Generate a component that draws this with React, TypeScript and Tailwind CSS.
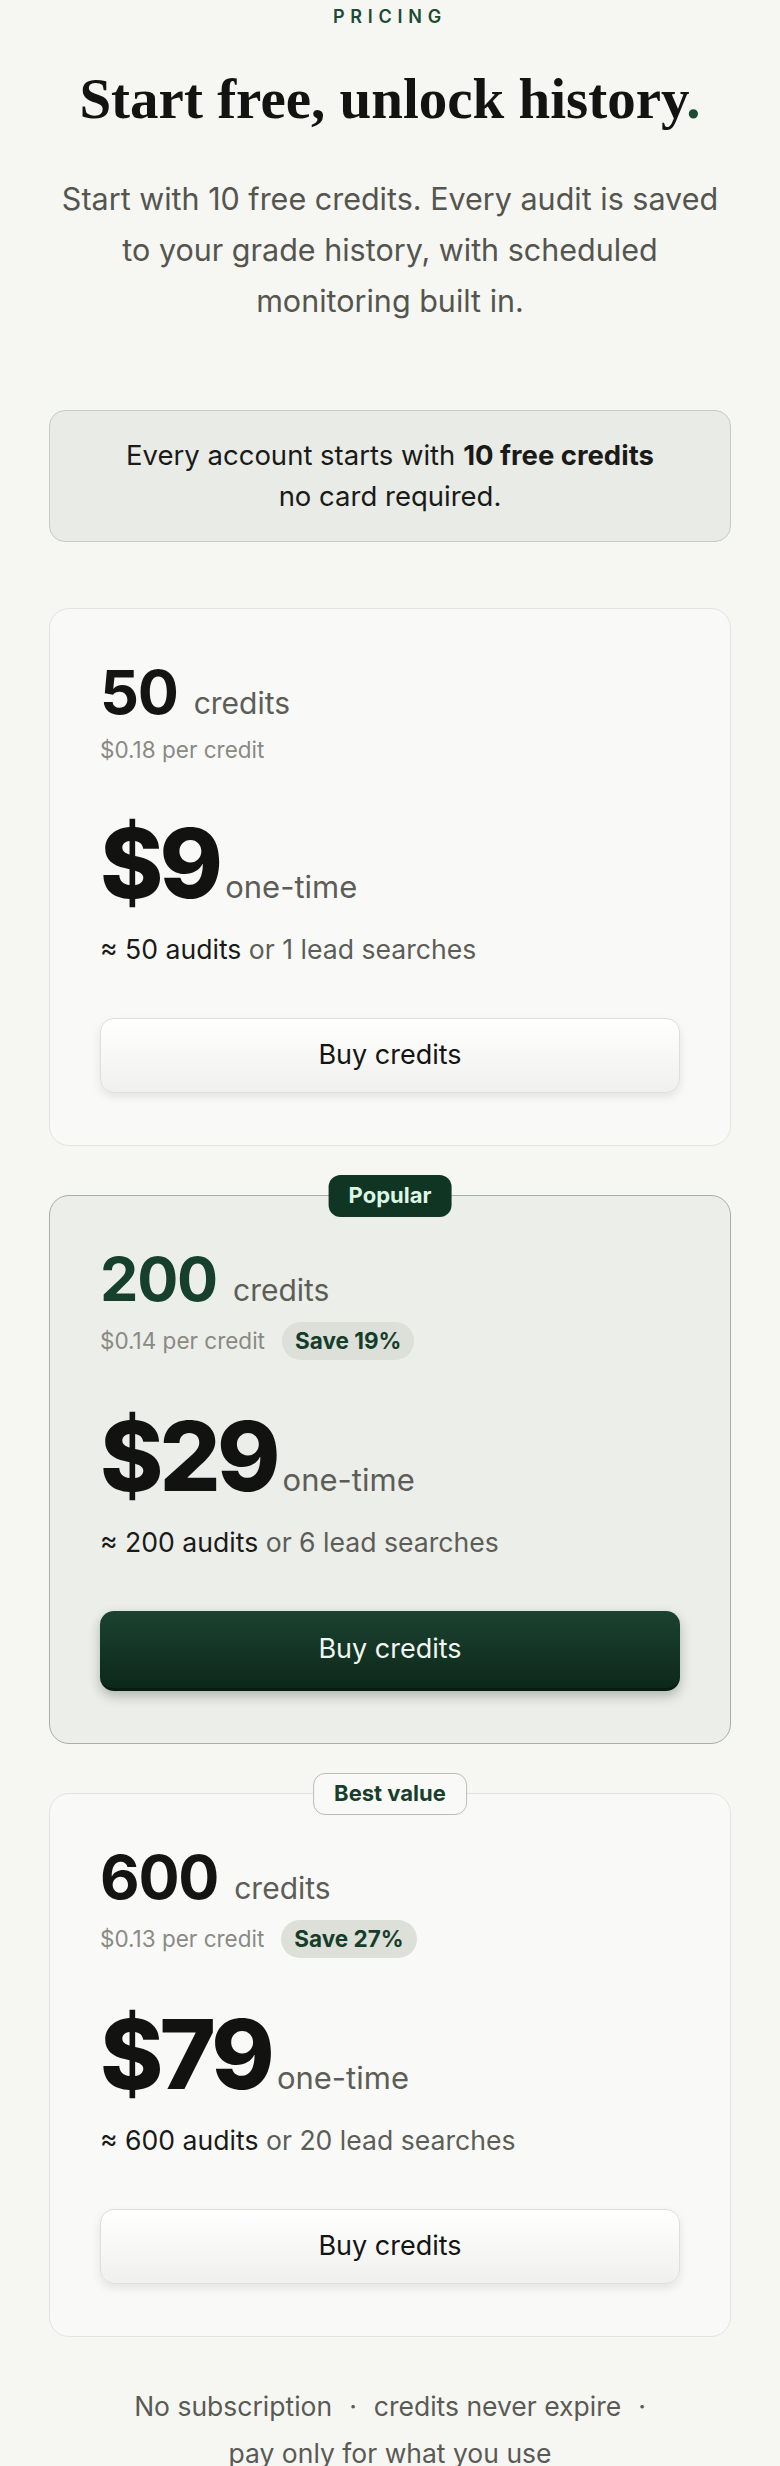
import React from "react";

const PACKS = [
  {
    credits: "200",
    perCredit: "$0.14 per credit",
    save: "Save 19%",
    price: "$29",
    audits: "200 audits",
    leads: "or 6 lead searches",
  },
];

function Badge({ kind }: { kind: "popular" | "best" }) {
  if (kind === "popular") {
    return (
      <div className="absolute left-1/2 -top-[21px] -translate-x-1/2 h-[42px] px-[20px] flex items-center rounded-[12px] bg-[#113523] text-[#dcf6e6] text-[22px] font-bold whitespace-nowrap">
        Popular
      </div>
    );
  }
  return (
    <div className="absolute left-1/2 -top-[21px] -translate-x-1/2 h-[42px] px-[20px] flex items-center rounded-[12px] bg-[#f9faf7] border-[1.5px] border-[#b9bdb6] text-[#173f2b] text-[22px] font-bold whitespace-nowrap">
      Best value
    </div>
  );
}

function Card({
  credits,
  perCredit,
  save,
  price,
  audits,
  leads,
  featured,
  badge,
}: {
  credits: string;
  perCredit: string;
  save?: string;
  price: string;
  audits: string;
  leads: string;
  featured?: boolean;
  badge?: "popular" | "best";
}) {
  return (
    <div
      className={
        "relative rounded-[20px] border px-[50px] pt-[53px] pb-[52px] " +
        (featured ? "bg-[#eceee9] border-[#a9aea6]" : "bg-[#f9faf7] border-[#e2e4de]")
      }
    >
      {badge && <Badge kind={badge} />}
      <div className="flex items-baseline gap-[16px] leading-none">
        <span className={"text-[61px] font-bold tracking-[-0.02em] " + (featured ? "text-[#17402c]" : "text-[#141412]")}>
          {credits}
        </span>
        <span className="text-[30px] text-[#5d5d58]">credits</span>
      </div>
      <div className={"flex items-center gap-[17px] min-h-[30px] " + (save ? "mt-[12px]" : "mt-[10px]")}>
        <span className="text-[22.5px] text-[#8a8a85]">{perCredit}</span>
        {save && (
          <span className="h-[38px] px-[13px] flex items-center rounded-full bg-[#dce0d9] text-[#163d2a] text-[22.5px] font-bold">
            {save}
          </span>
        )}
      </div>
      <div className="mt-[48px] flex items-baseline leading-none">
        <span className="text-[96px] font-extrabold tracking-[-0.04em] text-[#121210]">{price}</span>
        <span className="ml-[6px] text-[31px] text-[#5d5d58]">one-time</span>
      </div>
      <div className="mt-[20px] text-[26.6px] leading-[36px] text-[#5d5d58]">
        <span className="text-[#1a1a18]">≈ {audits}</span> {leads}
      </div>
      {featured ? (
        <button className="mt-[51px] w-full h-[80px] rounded-[14px] bg-gradient-to-b from-[#1b4330] to-[#0d281b] border-b-[3px] border-[#081c12] text-[#f1f6f2] text-[27px] shadow-[0_5px_12px_rgba(10,40,25,0.28)]">
          Buy credits
        </button>
      ) : (
        <button className="mt-[51px] w-full h-[75px] rounded-[14px] bg-gradient-to-b from-white to-[#f0f0ed] border border-[#dedfda] text-[#141412] text-[27px] shadow-[0_4px_10px_rgba(0,0,0,0.09)]">
          Buy credits
        </button>
      )}
    </div>
  );
}

export default function App() {
  return (
    <div
      className="min-h-screen bg-[#f6f7f3] px-[49px] pt-[5px] pb-[40px] text-[#141412]"
      style={{ fontFamily: "Inter, 'Liberation Sans', sans-serif" }}
    >
      <div className="text-center text-[18px] leading-[24px] font-semibold tracking-[0.32em] text-[#1d4a33]">PRICING</div>
      <h1
        className="mt-[40px] text-center text-[57px] leading-[60px] font-bold text-[#131311]"
        style={{ fontFamily: "'Liberation Serif', serif" }}
      >
        Start free, unlock history<span className="text-[#1d4a33]">.</span>
      </h1>
      <p className="mt-[44px] mx-auto max-w-[690px] text-center text-[30.5px] leading-[51px] text-[#55554f]">
        Start with 10 free credits. Every audit is saved to your grade history, with scheduled monitoring built in.
      </p>
      <div className="mt-[84px] rounded-[16px] border border-[#c8ccc5] bg-[#e9ebe6] py-[24px] text-center text-[27.5px] leading-[41px] text-[#1a1a18]">
        Every account starts with <b className="font-bold">10 free credits</b>
        <br />
        no card required.
      </div>
      <div className="mt-[66px] flex flex-col gap-[49px]">
        <Card
          credits="50"
          perCredit="$0.18 per credit"
          price="$9"
          audits="50 audits"
          leads="or 1 lead searches"
        />
        {PACKS.map((p) => (
          <Card key={p.credits} {...p} featured badge="popular" />
        ))}
        <Card
          credits="600"
          perCredit="$0.13 per credit"
          save="Save 27%"
          price="$79"
          audits="600 audits"
          leads="or 20 lead searches"
          badge="best"
        />
      </div>
      <p className="mt-[46px] text-center text-[26.5px] leading-[47px] text-[#5a5a55]">
        <span className="whitespace-nowrap">No subscription</span>
        <span className="mx-[17px]">·</span>
        <span className="whitespace-nowrap">credits never expire</span>
        <span className="ml-[17px]">·</span>{" "}
        <span className="whitespace-nowrap">pay only for what you use</span>
      </p>
    </div>
  );
}
